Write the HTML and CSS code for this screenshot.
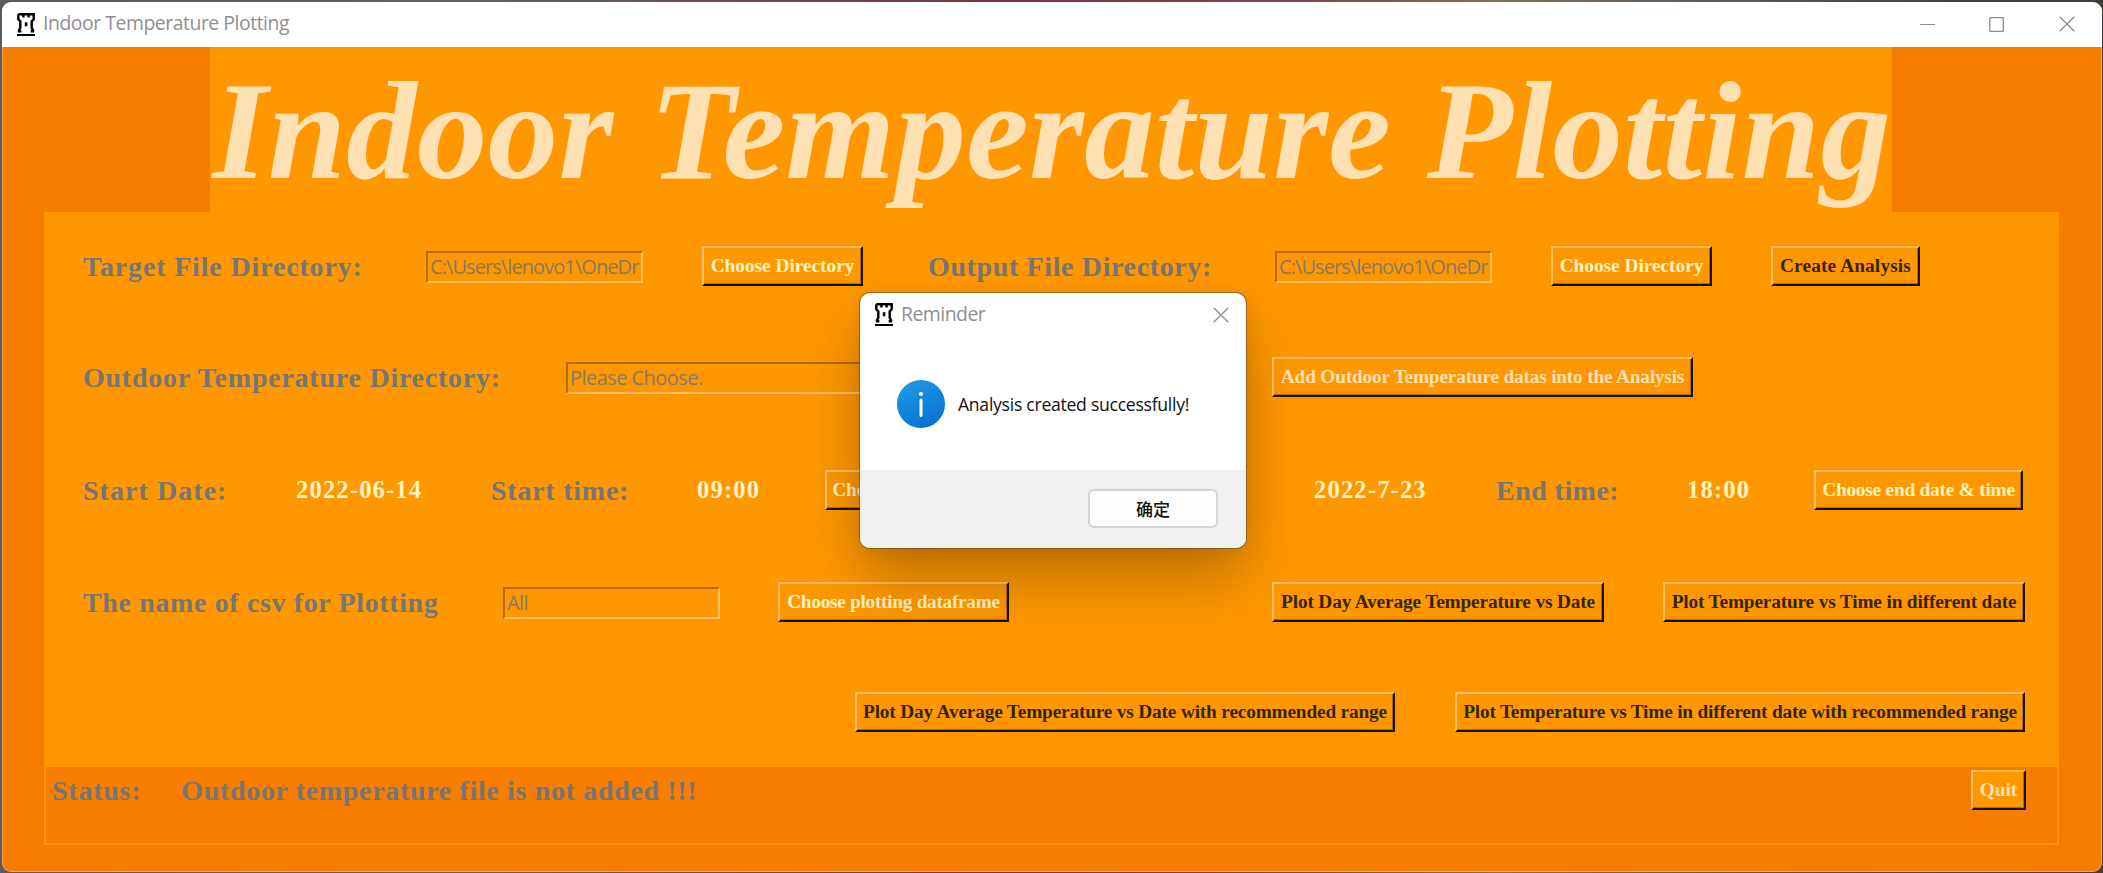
FILE: index.html
```html
<!DOCTYPE html>
<html lang="en">
<head>
<meta charset="utf-8">
<title>Indoor Temperature Plotting</title>
<link rel="stylesheet" href="styles.css">
</head>
<body>
<svg class="defs" width="0" height="0">
  <symbol id="rook" viewBox="0 0 18 23">
    <path d="M1.3 1.3h15.4v5l-2 2v6.5l1.3 2.2v1.3h-2.3M4.3 18.3H2v-1.3l1.3-2.2V8.3l-2-2V1.3M6.4 1.3v3.2M11.6 1.3v3.2" fill="none" stroke="#000" stroke-width="2.4"/>
    <path d="M7.8 9.2h2.6v4H7.8zM0 21h18v2H0z"/>
  </symbol>
  <symbol id="cross" viewBox="0 0 16 16">
    <path d="M.7.7l14.6 14.6M15.3.7L.7 15.3" fill="none" stroke="#8c8c8c" stroke-width="1.3"/>
  </symbol>
</svg>
<div class="window">
  <header class="titlebar">
    <svg class="rook"><use href="#rook"/></svg>
    <span class="caption">Indoor Temperature Plotting</span>
    <svg class="min" viewBox="0 0 15 15"><path d="M0 7.5h15" stroke="#8c8c8c" stroke-width="1.2"/></svg>
    <svg class="max" viewBox="0 0 15 15"><rect x=".7" y=".7" width="13.6" height="13.6" rx=".8" fill="none" stroke="#8c8c8c" stroke-width="1.3"/></svg>
    <svg class="close"><use href="#cross"/></svg>
  </header>
  <main class="client">
    <h1 class="banner">Indoor Temperature Plotting</h1>
    <section class="frame">
      <div class="row row-files">
        <span class="label target">Target File Directory:</span>
        <div class="entry path">C:\Users\lenovo1\OneDr</div>
        <button class="btn w-dir">Choose Directory</button>
        <span class="label out">Output File Directory:</span>
        <div class="entry path">C:\Users\lenovo1\OneDr</div>
        <button class="btn w-dir">Choose Directory</button>
        <button class="btn dark w-create">Create Analysis</button>
      </div>
      <div class="row row-outdoor">
        <span class="label">Outdoor Temperature Directory:</span>
        <div class="entry wide">Please Choose.</div>
        <button class="btn pale w-add">Add Outdoor Temperature datas into the Analysis</button>
      </div>
      <div class="row row-dates">
        <span class="label date">Start Date:</span>
        <span class="value">2022-06-14</span>
        <span class="label">Start time:</span>
        <span class="value">09:00</span>
        <button class="btn w-start">Choose start date &amp; time</button>
        <span class="value">2022-7-23</span>
        <span class="label end">End time:</span>
        <span class="value">18:00</span>
        <button class="btn w-end">Choose end date &amp; time</button>
      </div>
      <div class="row row-plot">
        <span class="label out">The name of csv for Plotting</span>
        <div class="entry">All</div>
        <button class="btn w-frame">Choose plotting dataframe</button>
        <button class="btn dark w-avg">Plot Day Average Temperature vs Date</button>
        <button class="btn dark w-time">Plot Temperature vs Time in different date</button>
      </div>
      <div class="row row-range">
        <button class="btn dark w-avg-range">Plot Day Average Temperature vs Date with recommended range</button>
        <button class="btn dark w-time-range">Plot Temperature vs Time in different date with recommended range</button>
      </div>
      <footer class="status">
        <span class="label">Status:</span>
        <span class="label message">Outdoor temperature file is not added !!!</span>
        <button class="btn pale w-quit">Quit</button>
      </footer>
    </section>
  </main>
</div>
<div class="dialog">
  <div class="dialog-title">
    <svg class="rook"><use href="#rook"/></svg>
    <span class="caption">Reminder</span>
    <svg class="close"><use href="#cross"/></svg>
  </div>
  <div class="dialog-body">
    <svg class="info" viewBox="0 0 48 48">
      <defs><linearGradient id="blue" x1=".2" y1="0" x2=".7" y2="1"><stop offset="0" stop-color="#1e9be3"/><stop offset="1" stop-color="#0670d2"/></linearGradient></defs>
      <circle cx="24" cy="24" r="24" fill="url(#blue)"/>
      <circle cx="24" cy="14" r="2.1" fill="#fff"/>
      <path d="M24 20v15.5" stroke="#fff" stroke-width="3" stroke-linecap="round"/>
    </svg>
    <span class="notice">Analysis created successfully!</span>
  </div>
  <div class="dialog-foot"><button class="ok">确定</button></div>
</div>
</body>
</html>
```
FILE: styles.css
```css
* { box-sizing: border-box; }
body {
  margin: 0;
  width: 2103px;
  height: 873px;
  padding: 2px 1px 1px 2px;
  overflow: hidden;
  background: linear-gradient(90deg, #5b5b5d 0, #625f60 480px, #6b4a4a 800px, #77343a 1000px, #7b4a48 1300px, #80705f 1500px, #4a4542 1900px, #3c3c40 2103px);
}
.defs { position: absolute; }
.window {
  width: 2100px;
  height: 870px;
  display: flex;
  flex-direction: column;
  border-radius: 9px;
  overflow: hidden;
  background: #f77d00;
}
.titlebar {
  height: 45px;
  flex: none;
  display: flex;
  align-items: center;
  padding: 0 27px 1px 15px;
  background: #fff;
}
.rook { width: 18px; height: 23px; flex: none; }
.caption {
  margin-left: 8px;
  padding-bottom: 2px;
  font: 400 19.4px/28px "Open Sans", "Noto Sans", sans-serif;
  color: #8f8f8f;
  white-space: nowrap;
  letter-spacing: -0.46px;
}
.min { width: 15px; height: 15px; margin-left: auto; }
.max { width: 15px; height: 15px; margin-left: 54px; }
.close { width: 16px; height: 16px; }
.titlebar .close { margin-left: 55px; }
.client {
  flex: 1;
  display: flex;
  flex-direction: column;
  align-items: center;
  border: 1px solid #ffa04a;
  border-top: 0;
  border-radius: 0 0 9px 9px;
}
.banner {
  width: 1682px;
  height: 165px;
  margin: 0 3px 0 0;
  padding-left: 3px;
  background: #ff9800;
  color: #ffe0b2;
  font: italic bold 140.8px/167px "Liberation Serif", serif;
  letter-spacing: .36px;
  white-space: nowrap;
}
.frame {
  width: 2015px;
  height: 633px;
  margin-right: 1px;
  padding: 34px 2px 2px;
  background: #ff9800;
  display: flex;
  flex-direction: column;
}
.row { display: grid; height: 111px; flex: none; padding-left: 37px; justify-items: start; }
.row-files { grid-template-columns: 343px 276px 226px 347px 276px 220px auto; }
.row-outdoor { grid-template-columns: 483px 706px auto; height: 113px; }
.row-dates { grid-template-columns: 213px 195px 206px 128px 489px 182px 191px 127px auto; height: 112px; }
.row-plot { grid-template-columns: 420px 275px 494px 391px auto; height: 110px; }
.row-range { grid-template-columns: 600px auto; height: 75px; padding-left: 809px; }
.label, .value {
  font: bold 28px/42px "Liberation Serif", serif;
  letter-spacing: .76px;
  color: #757575;
  white-space: nowrap;
}
.target { letter-spacing: .84px; }
.out { letter-spacing: .63px; }
.end { letter-spacing: .45px; }
.date { letter-spacing: 1.05px; }
.value { font-size: 24.6px; line-height: 40px; letter-spacing: 1.15px; color: #fff3c4; }
.entry {
  width: 217px;
  height: 32px;
  margin-top: 5px;
  padding-left: 2px;
  border: 2px solid;
  border-color: #b36a00 #ffc166 #ffc166 #b36a00;
  overflow: hidden;
  font: 20px/28px "Open Sans", "Noto Sans", sans-serif;
  letter-spacing: -.55px;
  color: #85786a;
  white-space: nowrap;
}
.path { letter-spacing: -.92px; }
.wide { width: 640px; }
.btn {
  height: 40px;
  padding: 0;
  border: 2px solid;
  border-color: #ffc166 #1a1000 #1a1000 #ffc166;
  border-radius: 0;
  background: #ff9800;
  box-shadow: inset -1px -1px #b36a00;
  font: bold 19.3px/34px "Liberation Serif", serif;
  color: #fff3c4;
  white-space: nowrap;
}
.dark { color: #33260f; }
.pale { color: #ffe0b2; }
.w-dir { width: 161px; }
.w-create { width: 149px; letter-spacing: .15px; }
.w-add { width: 421px; letter-spacing: -.18px; }
.w-start { width: 216px; padding-left: 4px; }
.w-end { width: 209px; letter-spacing: -.2px; }
.w-frame { width: 231px; letter-spacing: -.28px; }
.w-avg { width: 332px; letter-spacing: -.14px; }
.w-time { width: 362px; letter-spacing: -.15px; }
.w-avg-range { width: 540px; letter-spacing: -.16px; }
.w-time-range { width: 570px; letter-spacing: -.18px; }
.w-quit { width: 55px; margin-left: auto; margin-top: 3px; }
.status {
  flex: 1;
  display: flex;
  align-items: flex-start;
  padding: 0 31px 0 6px;
  background: #f77d00;
}
.status .label { line-height: 47px; }
.status .message { margin-left: 40px; letter-spacing: .66px; }
.dialog {
  position: absolute;
  left: 860px;
  top: 293px;
  width: 386px;
  height: 255px;
  display: flex;
  flex-direction: column;
  border-radius: 10px;
  overflow: hidden;
  background: #fff;
  box-shadow: 0 0 0 1px rgba(90, 70, 40, .55), 0 32px 60px rgba(0, 0, 0, .26), 0 4px 18px rgba(0, 0, 0, .08);
}
.dialog-title { height: 43px; display: flex; align-items: center; padding: 0 17px 0 15px; }
.dialog-title .caption { letter-spacing: -.5px; }
.dialog-title .close { margin-left: auto; }
.dialog-body { height: 134px; display: flex; align-items: center; padding: 1px 0 0 37px; }
.info { width: 48px; height: 48px; }
.notice {
  margin-left: 13px;
  font: 17.6px/24px "Open Sans", "Noto Sans", sans-serif;
  letter-spacing: -.27px;
  color: #111;
  white-space: nowrap;
}
.dialog-foot { flex: 1; display: flex; justify-content: flex-end; padding: 19px 28px 0 0; background: #f0f0f0; }
.ok {
  width: 130px;
  height: 39px;
  padding: 0;
  border: 2px solid #d4d4d4;
  border-radius: 6px;
  background: #fdfdfd;
  font: 500 17px/34px "Noto Sans CJK SC", sans-serif;
  color: #111;
}
```
